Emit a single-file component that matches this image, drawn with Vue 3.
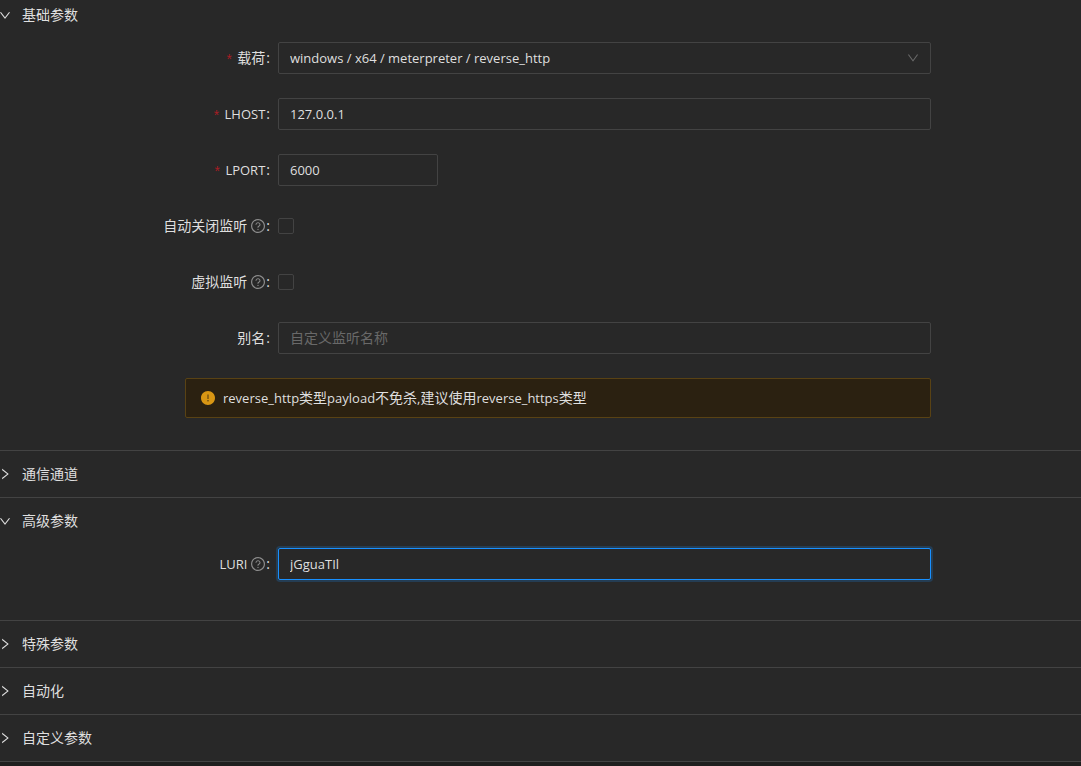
<script setup>
import { ref, reactive } from 'vue'

const open = reactive({ base: true, channel: false, advanced: true, special: false, auto: false, custom: false })
const payload = ref('windows / x64 / meterpreter / reverse_http')
const lhost = ref('127.0.0.1')
const lport = ref('6000')
const autoClose = ref(false)
const virtual = ref(false)
const alias = ref('')
const luri = ref('jGguaTIl')

const sections = [
  { key: 'base', title: '基础参数' },
  { key: 'channel', title: '通信通道' },
  { key: 'advanced', title: '高级参数' },
  { key: 'special', title: '特殊参数' },
  { key: 'auto', title: '自动化' },
  { key: 'custom', title: '自定义参数' }
]

const helpRing = 'M512 64C264.6 64 64 264.6 64 512s200.6 448 448 448 448-200.6 448-448S759.4 64 512 64zm0 820c-205.4 0-372-166.6-372-372s166.6-372 372-372 372 166.6 372 372-166.6 372-372 372z'
const helpMark = 'M623.6 316.7C593.6 290.4 554 276 512 276s-81.6 14.5-111.6 40.7C369.2 344 352 380.7 352 420v7.6c0 4.4 3.6 8 8 8h48c4.4 0 8-3.6 8-8V420c0-44.1 43.1-80 96-80s96 35.9 96 80c0 31.1-22 59.6-56.1 72.7-21.2 8.1-39.2 22.3-52.1 40.9-13.1 19-19.9 41.8-19.9 64.9V620c0 4.4 3.6 8 8 8h48c4.4 0 8-3.6 8-8v-22.7a48.3 48.3 0 0130.9-44.8c59-22.7 97.1-74.7 97.1-132.5.1-39.3-17.1-76-48.3-103.3zM472 732a40 40 0 1080 0 40 40 0 10-80 0z'
</script>

<template>
  <main class="collapse">
    <section v-for="s in sections" :key="s.key" class="panel">
      <button type="button" class="panel-header" :aria-expanded="open[s.key]" @click="open[s.key] = !open[s.key]">
        <svg class="arrow" :class="{ expanded: open[s.key] }" viewBox="146 146 732 732" aria-hidden="true">
          <path d="M765.7 486.8L314.9 134.7A7.97 7.97 0 00302 141v77.3c0 4.9 2.3 9.6 6.1 12.6l360 281.1-360 281.1c-3.9 3-6.1 7.7-6.1 12.6V883c0 6.7 7.7 10.4 12.9 6.3l450.8-352.1a31.96 31.96 0 000-50.4z" />
        </svg>
        <span>{{ s.title }}</span>
      </button>

      <form v-if="s.key === 'base' && open.base" class="panel-body" @submit.prevent>
        <div class="row">
          <label class="label required" for="payload">载荷<span class="colon">:</span></label>
          <div class="control select-wrap">
            <select id="payload" v-model="payload" class="field">
              <option>windows / x64 / meterpreter / reverse_http</option>
            </select>
            <svg class="caret" viewBox="64 64 896 896" aria-hidden="true">
              <path d="M884 256h-75c-5.1 0-9.9 2.5-12.9 6.6L512 654.2 227.9 262.6c-3-4.1-7.8-6.6-12.9-6.6h-75c-6.5 0-10.3 7.4-6.5 12.7l352.6 486.1c12.8 17.6 39 17.6 51.7 0l352.6-486.1c3.9-5.3.1-12.7-6.4-12.7z" />
            </svg>
          </div>
        </div>
        <div class="row">
          <label class="label required" for="lhost"><span class="latin">LHOST</span><span class="colon">:</span></label>
          <div class="control"><input id="lhost" v-model="lhost" class="field" type="text"></div>
        </div>
        <div class="row">
          <label class="label required" for="lport"><span class="latin">LPORT</span><span class="colon">:</span></label>
          <div class="control"><input id="lport" v-model="lport" class="field number" type="text" inputmode="numeric"></div>
        </div>
        <div class="row">
          <label class="label" for="autoclose">自动关闭监听
            <svg class="help" viewBox="64 64 896 896" aria-hidden="true"><path :d="helpRing" /><path :d="helpMark" /></svg>
            <span class="colon">:</span>
          </label>
          <div class="control"><input id="autoclose" v-model="autoClose" class="check" type="checkbox"></div>
        </div>
        <div class="row">
          <label class="label" for="virtual">虚拟监听
            <svg class="help" viewBox="64 64 896 896" aria-hidden="true"><path :d="helpRing" /><path :d="helpMark" /></svg>
            <span class="colon">:</span>
          </label>
          <div class="control"><input id="virtual" v-model="virtual" class="check" type="checkbox"></div>
        </div>
        <div class="row">
          <label class="label" for="alias">别名<span class="colon">:</span></label>
          <div class="control"><input id="alias" v-model="alias" class="field" type="text" placeholder="自定义监听名称"></div>
        </div>
        <div class="row alert-row">
          <div class="alert" role="alert">
            <svg class="warn" viewBox="64 64 896 896" aria-hidden="true">
              <circle class="warn-mark" cx="512" cy="512" r="400" />
              <path d="M512 64C264.6 64 64 264.6 64 512s200.6 448 448 448 448-200.6 448-448S759.4 64 512 64zm-32 232c0-4.4 3.6-8 8-8h48c4.4 0 8 3.6 8 8v272c0 4.4-3.6 8-8 8h-48c-4.4 0-8-3.6-8-8V296zm32 440a48.01 48.01 0 010-96 48.01 48.01 0 010 96z" />
            </svg>
            <p class="message"><span class="latin">reverse_http</span>类型<span class="latin">payload</span>不免杀<span class="latin">,</span>建议使用<span class="latin">reverse_https</span>类型</p>
          </div>
        </div>
      </form>

      <form v-if="s.key === 'advanced' && open.advanced" class="panel-body" @submit.prevent>
        <div class="row">
          <label class="label" for="luri"><span class="latin">LURI</span>
            <svg class="help" viewBox="64 64 896 896" aria-hidden="true"><path :d="helpRing" /><path :d="helpMark" /></svg>
            <span class="colon">:</span>
          </label>
          <div class="control"><input id="luri" v-model="luri" class="field active" type="text"></div>
        </div>
      </form>
    </section>
  </main>
</template>

<style>
body {
  background: #1f1f1f;
}
</style>

<style scoped>
.collapse {
  background: #282828;
  color: #dfdfdf;
  font-family: "Open Sans", "Noto Sans CJK SC", sans-serif;
  font-size: 14px;
  line-height: 22px;
}
.latin {
  font-size: 13px;
}
.panel {
  border-bottom: 1px solid #434343;
}
.panel-header {
  display: flex;
  align-items: center;
  gap: 12px;
  width: 100%;
  padding: 12px 0;
  border: 0;
  background: none;
  color: inherit;
  font: inherit;
  text-align: left;
  cursor: pointer;
}
.panel:first-child .panel-header {
  padding-top: 4px;
}
.arrow {
  width: 10px;
  height: 10px;
  fill: currentColor;
  overflow: visible;
}
.arrow.expanded {
  transform: rotate(90deg);
}
.panel-body {
  padding: 4px 0 16px;
}
.row {
  display: grid;
  grid-template-columns: minmax(0, 185fr) minmax(0, 93fr) minmax(0, 653fr) minmax(0, 150fr);
  margin-bottom: 24px;
}
.label {
  grid-column: 1 / 3;
  display: flex;
  align-items: center;
  justify-content: flex-end;
  height: 32px;
  white-space: nowrap;
}
.required::before {
  content: "*";
  margin-right: 4px;
  padding-top: 6px;
  color: #a61d24;
  font-family: "Liberation Mono", monospace;
}
.colon {
  margin: 0 8px 0 1px;
}
.help {
  width: 14px;
  height: 14px;
  margin-left: 4px;
  fill: #8c8c8c;
}
.control {
  grid-column: 3;
  display: flex;
  align-items: center;
}
.field {
  box-sizing: border-box;
  width: 100%;
  height: 32px;
  padding: 0 11px;
  border: 1px solid #434343;
  border-radius: 2px;
  outline: none;
  background: transparent;
  color: inherit;
  font-family: inherit;
  font-size: 13px;
  appearance: none;
}
.field::placeholder {
  color: #696969;
  font-size: 14px;
}
.field.number {
  width: 160px;
}
.field.active {
  border-color: #1890ff;
  box-shadow: 0 0 0 2px rgba(24, 144, 255, 0.2);
}
.select-wrap {
  position: relative;
}
.caret {
  position: absolute;
  right: 12px;
  width: 12px;
  height: 12px;
  fill: #696969;
  pointer-events: none;
}
.check {
  width: 16px;
  height: 16px;
  margin: 0;
  border: 1px solid #434343;
  border-radius: 2px;
  background: transparent;
  appearance: none;
}
.check:checked {
  border-color: #1890ff;
  background: #1890ff;
}
.alert-row {
  margin-bottom: 16px;
}
.alert {
  grid-column: 2 / 4;
  display: flex;
  align-items: center;
  gap: 8px;
  padding: 8px 15px;
  border: 1px solid #594214;
  border-radius: 2px;
  background: #2b2111;
}
.message {
  margin: 0;
}
.warn {
  width: 14px;
  height: 14px;
  fill: #d89614;
}
.warn-mark {
  fill: #4a3510;
}
</style>
